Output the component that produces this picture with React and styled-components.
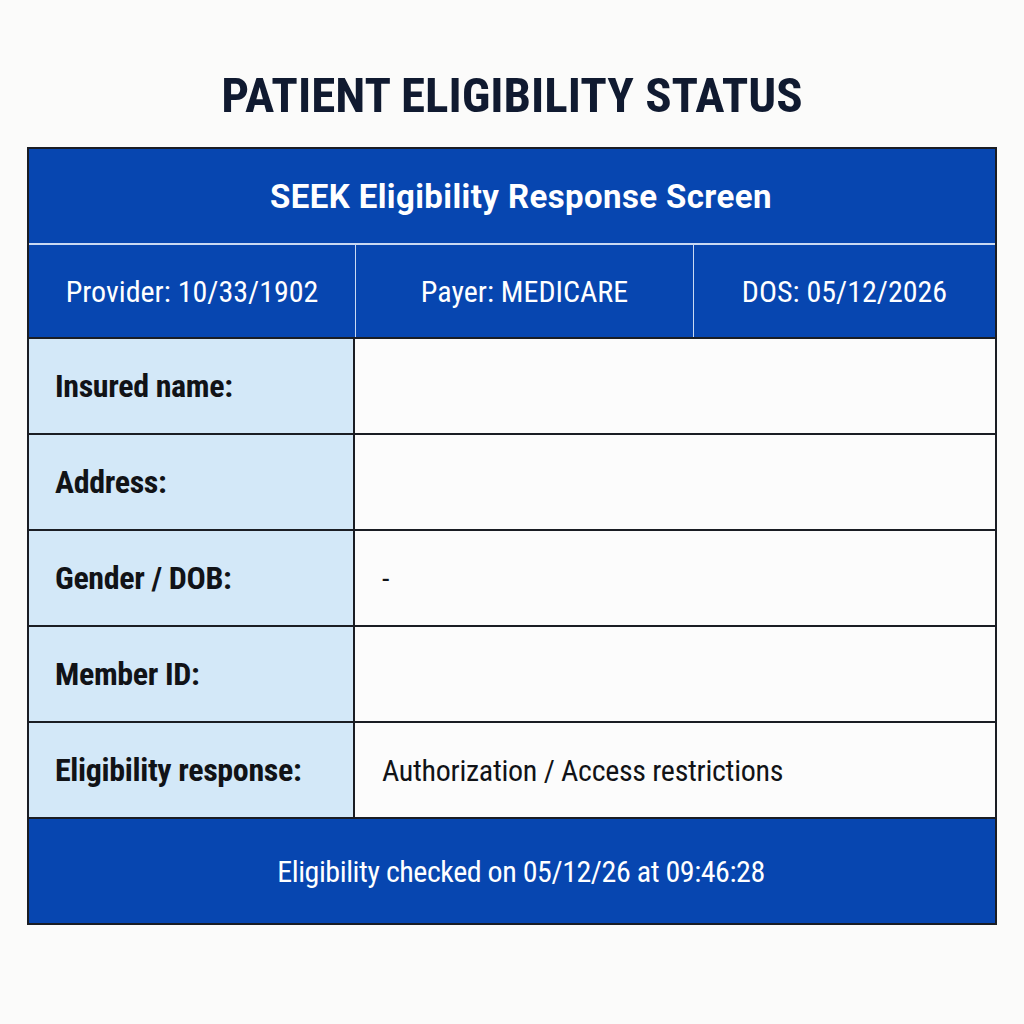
import React from 'react';
import styled, { createGlobalStyle } from 'styled-components';

const GlobalStyle = createGlobalStyle`
  html, body {
    margin: 0;
    padding: 0;
    background: #fbfbfa;
  }
  body {
    font-family: "Roboto", "Liberation Sans", sans-serif;
  }
`;

const BLUE = '#0746b0';
const LINE = '#1a1d24';

const Page = styled.div`
  width: 1024px;
  height: 1024px;
  box-sizing: border-box;
  padding: 71px 27px 0 27px;
  display: flex;
  flex-direction: column;
  align-items: stretch;
`;

const Title = styled.h1`
  margin: 0 0 26px 0;
  height: 50px;
  line-height: 50px;
  text-align: center;
  font-size: 49px;
  font-weight: 700;
  font-stretch: 78%;
  color: #101a30;
`;

const Card = styled.div`
  border: 2px solid ${LINE};
  display: flex;
  flex-direction: column;
`;

const Header = styled.div`
  height: 94px;
  padding-left: 18px;
  background: ${BLUE};
  color: #fff;
  display: flex;
  align-items: center;
  justify-content: center;
  font-size: 33px;
  font-weight: 700;
  letter-spacing: 0.4px;
  border-bottom: 2px solid #c9d9f2;
`;

const SubHeader = styled.div`
  display: grid;
  grid-template-columns: 326px 338px 1fr;
  height: 92px;
  background: ${BLUE};
  border-bottom: 2px solid ${LINE};
`;

const SubCell = styled.div`
  display: flex;
  align-items: center;
  justify-content: center;
  color: #fff;
  font-size: 30px;
  font-stretch: 78%;
  border-left: ${p => (p.first ? 'none' : '1px solid #c9d9f2')};
`;

const Row = styled.div`
  display: grid;
  grid-template-columns: 326px 1fr;
  height: 94px;
  border-bottom: 2px solid ${LINE};
`;

const Label = styled.div`
  background: #d3e8f8;
  display: flex;
  align-items: center;
  padding-left: 26px;
  font-size: 32px;
  font-weight: 700;
  font-stretch: 75%;
  letter-spacing: -0.35px;
  color: #111317;
  border-right: 2px solid ${LINE};
`;

const Value = styled.div`
  background: #fcfcfc;
  display: flex;
  align-items: center;
  padding-left: 27px;
  font-size: 30px;
  font-stretch: 75%;
  letter-spacing: -0.3px;
  color: #111317;
`;

const Footer = styled.div`
  height: 104px;
  padding-left: 18px;
  background: ${BLUE};
  color: #fff;
  display: flex;
  align-items: center;
  justify-content: center;
  font-size: 30px;
  font-stretch: 75%;
  letter-spacing: -0.45px;
`;

const rows = [
  { label: 'Insured name:', value: '' },
  { label: 'Address:', value: '' },
  { label: 'Gender / DOB:', value: '-' },
  { label: 'Member ID:', value: '' },
  { label: 'Eligibility response:', value: 'Authorization / Access restrictions' },
];

export default function App() {
  return (
    <Page>
      <GlobalStyle />
      <Title>PATIENT ELIGIBILITY STATUS</Title>
      <Card>
        <Header>SEEK Eligibility Response Screen</Header>
        <SubHeader>
          <SubCell first>Provider: 10/33/1902</SubCell>
          <SubCell>Payer: MEDICARE</SubCell>
          <SubCell>DOS: 05/12/2026</SubCell>
        </SubHeader>
        {rows.map(r => (
          <Row key={r.label}>
            <Label>{r.label}</Label>
            <Value>{r.value}</Value>
          </Row>
        ))}
        <Footer>Eligibility checked on 05/12/26 at 09:46:28</Footer>
      </Card>
    </Page>
  );
}
